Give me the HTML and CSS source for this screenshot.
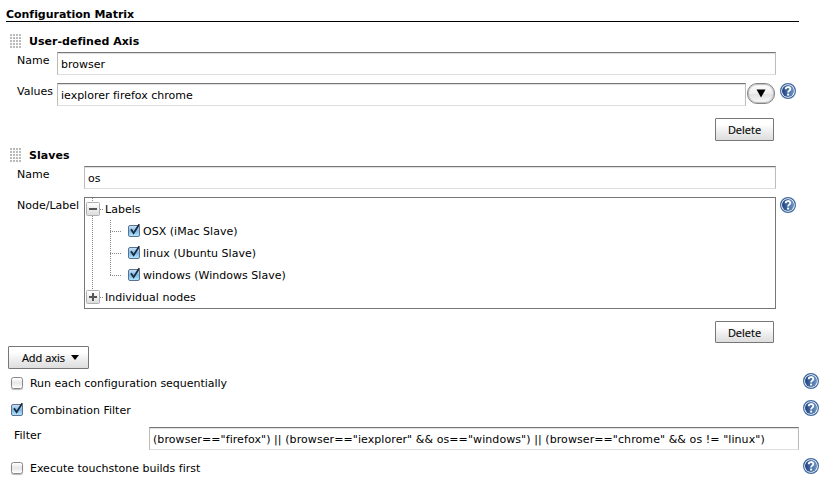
FILE: index.html
```html
<!DOCTYPE html>
<html lang="en">
<head>
<meta charset="utf-8">
<title>Configuration Matrix</title>
<link rel="stylesheet" href="styles.css">
</head>
<body>
<svg class="defs" width="0" height="0">
  <defs>
    <linearGradient id="blue" x2="1"><stop stop-color="#1d427f"/><stop offset="1" stop-color="#6d96c6"/></linearGradient>
    <linearGradient id="aqua" x2="0" y2="1"><stop stop-color="#cfe4f5"/><stop offset=".5" stop-color="#7db9e8"/><stop offset="1" stop-color="#b5eaff"/></linearGradient>
    <symbol id="help" viewBox="0 0 16 16">
      <circle cx="8" cy="8" r="7.4" fill="#fff" stroke="#3e679f" stroke-width="1.2"/>
      <circle cx="8" cy="8" r="6" fill="url(#blue)"/>
      <path d="M5.7 6.2C5.7 3.4 10.3 3.4 10.3 6C10.3 7.6 8.1 7.7 8.1 9.5" fill="none" stroke="#fff" stroke-width="1.9"/>
      <rect x="7.1" y="10.6" width="2" height="1.9" fill="#fff"/>
    </symbol>
    <symbol id="checked" viewBox="0 0 14 15">
      <rect x="1.5" y="2.5" width="11" height="11" rx="1.5" fill="url(#aqua)" stroke="#5c7290"/>
      <path d="M4 6.2L6.6 10.2L12.3 1.3" fill="none" stroke="#1c2b3c" stroke-width="1.8"/>
    </symbol>
  </defs>
</svg>
<main class="page">
  <h1 class="heading">Configuration Matrix</h1>

  <section class="axis">
    <h2 class="title"><i class="grip"></i><span>User-defined Axis</span></h2>
    <div class="row">
      <label class="label short">Name</label>
      <div class="input">browser</div>
    </div>
    <div class="row">
      <label class="label short">Values</label>
      <div class="input">iexplorer firefox chrome</div>
      <div class="drop"><svg width="10" height="9"><path d="M.5 .5H9.5L5 8.5Z"/></svg></div>
      <svg class="help"><use href="#help"/></svg>
    </div>
    <div class="actions"><div class="button delete">Delete</div></div>
  </section>

  <section class="axis">
    <h2 class="title"><i class="grip"></i><span>Slaves</span></h2>
    <div class="row">
      <label class="label long">Name</label>
      <div class="input">os</div>
    </div>
    <div class="row tree-row">
      <label class="label long">Node/Label</label>
      <div class="tree">
        <div class="node root first"><i class="toggle"></i><span>Labels</span></div>
        <div class="node leaf"><i class="branch"></i><svg class="check"><use href="#checked"/></svg><span>OSX (iMac Slave)</span></div>
        <div class="node leaf"><i class="branch"></i><svg class="check"><use href="#checked"/></svg><span>linux (Ubuntu Slave)</span></div>
        <div class="node leaf"><i class="branch end"></i><svg class="check"><use href="#checked"/></svg><span>windows (Windows Slave)</span></div>
        <div class="node root last"><i class="toggle plus"></i><span>Individual nodes</span></div>
      </div>
      <svg class="help"><use href="#help"/></svg>
    </div>
    <div class="actions lower"><div class="button delete">Delete</div></div>
  </section>

  <div class="button add"><span>Add axis</span><svg width="8" height="5"><path d="M0 0H8L4 5Z"/></svg></div>

  <div class="option run"><i class="box"></i><span class="text">Run each configuration sequentially</span><svg class="help"><use href="#help"/></svg></div>
  <div class="option combo"><svg class="check"><use href="#checked"/></svg><span class="text">Combination Filter</span><svg class="help"><use href="#help"/></svg></div>
  <div class="filter">
    <label class="label">Filter</label>
    <div class="input">(browser=="firefox") || (browser=="iexplorer" &amp;&amp; os=="windows") || (browser=="chrome" &amp;&amp; os != "linux")</div>
  </div>
  <div class="option exec"><i class="box"></i><span class="text">Execute touchstone builds first</span><svg class="help"><use href="#help"/></svg></div>
</main>
</body>
</html>
```
FILE: styles.css
```css
* { box-sizing: border-box; }
body { margin: 0; background: #fff; color: #000; font: 11px/14px Verdana, "DejaVu Sans", sans-serif; font-variant-ligatures: none; white-space: nowrap; }
svg { display: block; flex: none; }
.defs { position: absolute; }
.page { width: 827px; height: 484px; overflow: hidden; }
.heading { margin: 0 28px 8px 6px; height: 22px; padding-top: 8px; border-bottom: 1px solid #000; font-size: 11px; letter-spacing: -.03px; }
.title { display: flex; align-items: center; gap: 8px; height: 22px; margin: 0; padding-left: 10px; font-size: 11px; }
.title span { padding-top: 2px; letter-spacing: .03px; }
.grip { width: 12px; height: 15px; margin-right: -1px; background: radial-gradient(circle at 1px 1px, #bbb 0 .8px, transparent 1.1px) 0 0 / 3px 3px; }
.row { display: flex; width: 796px; height: 23px; margin-bottom: 8px; }
.label { flex: none; padding: 2px 0 0 17px; }
.short { width: 57px; }
.long { width: 84px; }
.input { flex: none; height: 23px; padding: 5px 3px 0; border: 1px solid #bcbcbc; border-top-color: #777; border-bottom-color: #ddd; box-shadow: inset 0 1px 1px #ddd; }
.row .input { flex: 1; margin-right: 20px; }
.row .input:has(+ .drop) { margin-right: 1px; }
.drop { display: grid; place-items: center; width: 28px; height: 21px; border: 1.5px solid #858585; border-radius: 10px; background: linear-gradient(#fff, #eee 50%, #e2e2e2 55%, #fafafa); box-shadow: inset 0 0 1px 1px #bbb; }
.help { width: 16px; height: 16px; }
.row .help { margin-left: 5px; }
.tree-row .help { margin-left: 4px; }
.actions { display: flex; justify-content: flex-end; width: 774px; height: 23px; margin: 12px 0 3px; }
.button { display: flex; align-items: center; justify-content: center; height: 23px; border: 1px solid #777; border-radius: 1px; background: linear-gradient(#fff 25%, #eee 60%, #ddd); font: 11px/14px "Lucida Grande", "Open Sans", sans-serif; -webkit-text-stroke: .15px #000; }
.delete { width: 59px; }
.lower, .lower .button { height: 22px; }
.lower .button { padding-top: 1px; }
.tree-row { height: 112px; }
.tree { flex: 1; border: 1px solid #777; }
.node { display: flex; align-items: center; height: 22px; }
.node span { padding-top: 1px; letter-spacing: .03px; }
.root { padding-left: 1px; }
.root > span { margin-left: 5px; }
.first { background: repeating-linear-gradient(#888 0 1px, transparent 1px 2px) 7px 0 / 1px 22px no-repeat, repeating-linear-gradient(90deg, #888 0 1px, transparent 1px 2px) 15px 11px / 3px 1px no-repeat; }
.last { background: repeating-linear-gradient(#888 0 1px, transparent 1px 2px) 7px 0 / 1px 6px no-repeat, repeating-linear-gradient(90deg, #888 0 1px, transparent 1px 2px) 15px 11px / 3px 1px no-repeat; }
.toggle { display: block; width: 14px; height: 14px; border: 1px solid #b0b0b0; border-radius: 1.5px; background: linear-gradient(#555, #555) 2px 5px / 8px 2px no-repeat, linear-gradient(#fff, #ddd); }
.plus { background: linear-gradient(#555, #555) 2px 5px / 8px 2px no-repeat, linear-gradient(#555, #555) 5px 2px / 2px 8px no-repeat, linear-gradient(#fff, #ddd); }
.leaf { background: repeating-linear-gradient(#888 0 1px, transparent 1px 2px) 7px 0 / 1px 22px no-repeat; padding-left: 25px; }
.branch { width: 12px; height: 22px; margin-right: 5px; background: repeating-linear-gradient(#888 0 1px, transparent 1px 2px) 0 0 / 1px 22px no-repeat, repeating-linear-gradient(90deg, #888 0 1px, transparent 1px 2px) 0 11px / 12px 1px no-repeat; }
.end { background-size: 1px 12px, 12px 1px; }
.check { width: 14px; height: 15px; margin-bottom: 2px; }
.leaf .check { margin-right: 2px; }
.add { width: 81px; margin: 3px 0 3px 8px; padding-left: 4px; gap: 6px; }
.option { display: flex; align-items: center; width: 819px; height: 22px; padding-left: 10px; }
.text { flex: 1; margin-left: 6px; padding-top: 2px; }
.run .text { padding-top: 1px; letter-spacing: -.03px; }
.option .help { margin-bottom: 4px; }
.box { width: 12px; height: 12px; margin: 0 1px; border: 1px solid #888; border-radius: 2.5px; background: linear-gradient(#fff, #e6e6e6 50%, #fff); box-shadow: 0 1px 1px #bbb; }
.combo { margin: 5px 0 6px; }
.filter { display: flex; height: 23px; margin-bottom: 7px; }
.filter .label { width: 149px; padding-left: 14px; }
.filter .input { width: 650px; letter-spacing: .08px; }
```
